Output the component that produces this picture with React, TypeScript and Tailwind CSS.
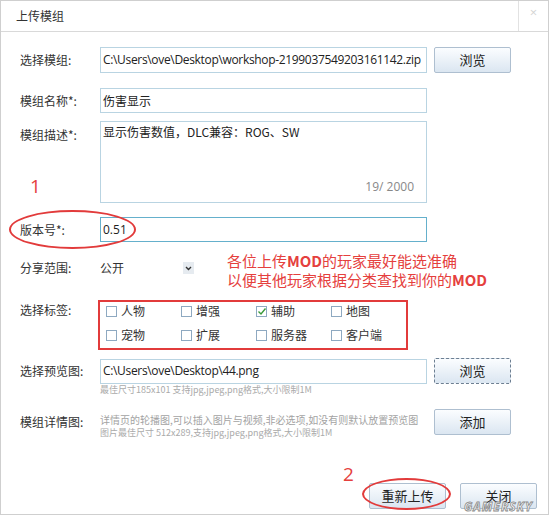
import React from "react";

const cjk = { fontFamily: '"Noto Sans CJK SC", "Noto Sans", sans-serif' };
const latin = { fontFamily: '"Open Sans", "Noto Sans CJK SC", sans-serif' };

function Btn({ children, dashed }: { children: React.ReactNode; dashed?: boolean }) {
  return (
    <div
      className={
        "w-[77px] h-[26px] flex items-center justify-center text-[13px] text-[#222] rounded-[2px] bg-gradient-to-b from-[#fbfdff] to-[#dbe6f1] " +
        (dashed ? "border border-dashed border-[#6d7f92]" : "border border-[#aebfd0]")
      }
      style={cjk}
    >
      {children}
    </div>
  );
}

function Check({ label, checked }: { label: string; checked?: boolean }) {
  return (
    <div className="flex items-center h-[18px] w-[81px]">
      <div className="w-[11px] h-[11px] border border-[#8ea9c1] bg-white relative flex items-center justify-center">
        {checked && (
          <svg width="10" height="9" viewBox="0 0 10 9" className="absolute left-[0px] top-[0px]">
            <path d="M1.5 4.5 L4 7 L8.5 1.5" stroke="#3a9a3a" strokeWidth="1.4" fill="none" />
          </svg>
        )}
      </div>
      <span className="ml-[4px] text-[12px] text-[#333]" style={cjk}>{label}</span>
    </div>
  );
}

function Label({ children, className = "" }: { children: React.ReactNode; className?: string }) {
  return (
    <div className={"w-[80px] text-[12px] text-[#333] " + className} style={cjk}>
      {children}
    </div>
  );
}

export default function App() {
  return (
    <div className="w-[550px] h-[517px] bg-white relative overflow-hidden">
      <div className="w-[549px] h-[515px] border border-[#cfcfcf] bg-white flex flex-col">
        {/* Title bar */}
        <div className="h-[31px] border-b border-[#d9d9d9] flex items-stretch">
          <div className="flex-1 flex items-center pl-[15px] text-[12px] text-[#333]" style={cjk}>
            上传模组
          </div>
          <div className="w-[30px] border-l border-[#e2e2e2] flex items-start justify-center pt-[2px] text-[13px] text-[#d4d4d4]" style={latin}>
            ×
          </div>
        </div>

        <div className="flex flex-col pl-[19px]">
          {/* Row 1 */}
          <div className="flex items-center mt-[15px] h-[26px]">
            <Label>选择模组:</Label>
            <div className="w-[327px] h-[26px] border border-[#b9d4e2] flex items-center pl-[2px] text-[12px] text-[#222] tracking-[-0.33px] whitespace-nowrap overflow-hidden" style={latin}>
              C:\Users\ove\Desktop\workshop-2199037549203161142.zip
            </div>
            <div className="ml-[7px]"><Btn>浏览</Btn></div>
          </div>

          {/* Row 2 */}
          <div className="flex items-center mt-[15px] h-[25px]">
            <Label>模组名称*:</Label>
            <div className="w-[327px] h-[25px] border border-[#b9d4e2] flex items-center pl-[2px] text-[12px] text-[#222]" style={cjk}>
              伤害显示
            </div>
          </div>

          {/* Row 3 */}
          <div className="flex items-start mt-[8px] h-[82px]">
            <Label className="pt-[5px]">模组描述*:</Label>
            <div className="w-[327px] h-[82px] border border-[#b9d4e2] relative pl-[2px] pt-[1px] text-[12px] text-[#222]" style={cjk}>
              显示伤害数值，DLC兼容：ROG、SW
              <div className="absolute right-[12px] bottom-[6px] text-[12px] text-[#888]" style={latin}>19/ 2000</div>
            </div>
          </div>

          {/* Row 4 */}
          <div className="flex items-center mt-[14px] h-[25px]">
            <Label>版本号*:</Label>
            <div className="w-[327px] h-[25px] border border-[#65b0cc] flex items-center pl-[2px] text-[12px] text-[#222]" style={latin}>
              0.51
            </div>
          </div>

          {/* Row 5 share */}
          <div className="flex items-center mt-[12px] h-[28px]">
            <Label>分享范围:</Label>
            <div className="text-[12px] text-[#333] w-[83px]" style={cjk}>公开</div>
            <div className="w-[11px] h-[12px] bg-[#e6ebf0] flex items-center justify-center">
              <svg width="7" height="5" viewBox="0 0 7 5">
                <path d="M1 1 L3.5 3.5 L6 1" stroke="#333" strokeWidth="1.4" fill="none" />
              </svg>
            </div>
          </div>

          {/* Tags */}
          <div className="flex items-start mt-[18px]">
            <Label className="pt-[1px]">选择标签:</Label>
            <div className="w-[310px] h-[50px] border-2 border-[#e23b3b] -ml-[2px] pl-[6px] grid grid-cols-4 gap-y-[6px] content-start">
              <Check label="人物" />
              <Check label="增强" />
              <Check label="辅助" checked />
              <Check label="地图" />
              <Check label="宠物" />
              <Check label="扩展" />
              <Check label="服务器" />
              <Check label="客户端" />
            </div>
          </div>

          {/* Preview */}
          <div className="flex items-center mt-[8px] h-[26px]">
            <Label>选择预览图:</Label>
            <div className="w-[327px] h-[25px] border border-[#b9d4e2] flex items-center pl-[2px] text-[12px] text-[#222] tracking-[-0.33px]" style={latin}>
              C:\Users\ove\Desktop\44.png
            </div>
            <div className="ml-[7px]"><Btn dashed>浏览</Btn></div>
          </div>
          <div className="pl-[80px] mt-[1px] text-[9px] leading-[10px] text-[#aaa]" style={cjk}>
            最佳尺寸185x101 支持jpg,jpeg,png格式,大小限制1M
          </div>

          {/* Details */}
          <div className="flex items-center mt-[15px] h-[24px]">
            <Label>模组详情图:</Label>
            <div className="w-[327px] flex flex-col pt-[6px]">
              <div className="text-[10px] leading-[14px] text-[#a3a3a3] whitespace-nowrap" style={cjk}>
                详情页的轮播图,可以插入图片与视频,非必选项,如没有则默认放置预览图
              </div>
              <div className="text-[9px] leading-[11px] text-[#aaa] whitespace-nowrap" style={cjk}>
                图片最佳尺寸 512x289,支持jpg,jpeg,png格式,大小限制1M
              </div>
            </div>
            <div className="ml-[7px]"><Btn>添加</Btn></div>
          </div>
        </div>

        {/* Bottom buttons */}
        <div className="flex justify-end gap-[14px] pr-[11px] mt-[49px]">
          <Btn>重新上传</Btn>
          <Btn>关闭</Btn>
        </div>
      </div>

      {/* Annotations */}
      <div className="absolute left-[30px] top-[175px] text-[19px] leading-[22px] text-[#e5403d]" style={latin}>1</div>
      <div className="absolute left-[9px] top-[210px] w-[127px] h-[39px] border-2 border-[#e23b3b] rounded-[50%]" />
      <div className="absolute left-[227px] top-[251px] text-[15px] leading-[19px] text-[#e5403d] whitespace-nowrap" style={cjk}>
        <div>各位上传<b>MOD</b>的玩家最好能选准确</div>
        <div>以便其他玩家根据分类查找到你的<b>MOD</b></div>
      </div>
      <div className="absolute left-[343px] top-[463px] text-[19px] leading-[22px] text-[#e5403d]" style={latin}>2</div>
      <div className="absolute left-[362px] top-[478px] w-[89px] h-[32px] border-2 border-[#e23b3b] rounded-[50%]" />
      <div
        className="absolute left-[464px] top-[501px] text-[12px] leading-[12px] font-bold italic tracking-[1px] text-white [-webkit-text-stroke:0.8px_#8a8a8a]"
        style={latin}
      >
        GAMERSKY
      </div>
    </div>
  );
}
